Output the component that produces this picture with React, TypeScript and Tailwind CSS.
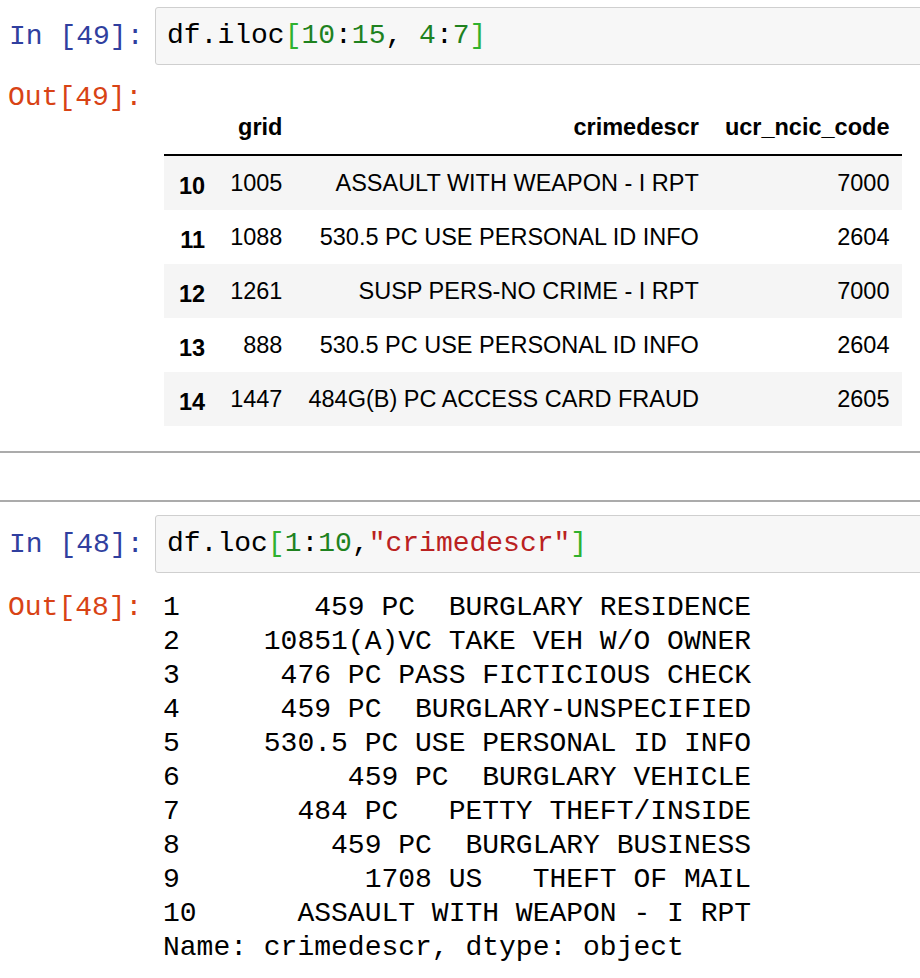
import React from "react";

const mono = "font-['Liberation_Mono',monospace] text-[28px]";

const rows = [
  { idx: "10", grid: "1005", desc: "ASSAULT WITH WEAPON - I RPT", code: "7000" },
  { idx: "11", grid: "1088", desc: "530.5 PC USE PERSONAL ID INFO", code: "2604" },
  { idx: "12", grid: "1261", desc: "SUSP PERS-NO CRIME - I RPT", code: "7000" },
  { idx: "13", grid: "888", desc: "530.5 PC USE PERSONAL ID INFO", code: "2604" },
  { idx: "14", grid: "1447", desc: "484G(B) PC ACCESS CARD FRAUD", code: "2605" },
];

const series: [string, string][] = [
  ["1", "459 PC  BURGLARY RESIDENCE"],
  ["2", "10851(A)VC TAKE VEH W/O OWNER"],
  ["3", "476 PC PASS FICTICIOUS CHECK"],
  ["4", "459 PC  BURGLARY-UNSPECIFIED"],
  ["5", "530.5 PC USE PERSONAL ID INFO"],
  ["6", "459 PC  BURGLARY VEHICLE"],
  ["7", "484 PC   PETTY THEFT/INSIDE"],
  ["8", "459 PC  BURGLARY BUSINESS"],
  ["9", "1708 US   THEFT OF MAIL"],
  ["10", "ASSAULT WITH WEAPON - I RPT"],
];

function InputRow({ n, children }: { n: number; children: React.ReactNode }) {
  return (
    <div className="flex">
      <div className={`${mono} w-[155px] shrink-0 pl-[9px] leading-[60px] text-[#303F9F]`}>
        In [{n}]:
      </div>
      <div
        className={`${mono} flex-1 -mr-[20px] h-[58px] border border-[#cfcfcf] rounded-[3px] bg-[#f7f7f7] pl-[11px] flex items-center text-black whitespace-pre`}
      >
        {children}
      </div>
    </div>
  );
}

const B = ({ c }: { c: string }) => <span className="text-[#2fb12f]">{c}</span>;
const N = ({ c }: { c: string }) => <span className="text-[#1f821f]">{c}</span>;

export default function App() {
  return (
    <div className="w-[920px] h-[978px] overflow-hidden bg-white">
      <div className="pt-[7px]">
        <InputRow n={49}>
          <span>df.iloc</span>
          <B c="[" />
          <N c="10" />
          <span>:</span>
          <N c="15" />
          <span>, </span>
          <N c="4" />
          <span>:</span>
          <N c="7" />
          <B c="]" />
        </InputRow>

        <div className="flex mt-[14px]">
          <div className={`${mono} w-[155px] shrink-0 pl-[8px] leading-[34px] text-[#D84315]`}>
            Out[49]:
          </div>
          <div className="pt-[20px] pl-[9px]">
            <table className="border-collapse font-['Liberation_Sans',Arial,sans-serif] text-[23.5px] text-black">
              <thead>
                <tr>
                  <th className="border-b-2 border-black px-[13px] py-[12px] leading-[29px]"></th>
                  <th className="border-b-2 border-black px-[13px] py-[12px] leading-[29px] text-right font-bold">grid</th>
                  <th className="border-b-2 border-black px-[13px] py-[12px] leading-[29px] text-right font-bold">crimedescr</th>
                  <th className="border-b-2 border-black px-[13px] py-[12px] leading-[29px] text-right font-bold">ucr_ncic_code</th>
                </tr>
              </thead>
              <tbody>
                {rows.map((r, i) => (
                  <tr key={r.idx} className={i % 2 === 0 ? "bg-[#f5f5f5]" : "bg-white"}>
                    <th className="pl-[15px] pr-[12px] leading-[30px] text-right font-bold pt-[15px] pb-[9px]">{r.idx}</th>
                    <td className="px-[13px] py-[12px] leading-[30px] text-right">{r.grid}</td>
                    <td className="px-[13px] py-[12px] leading-[30px] text-right">{r.desc}</td>
                    <td className="px-[13px] py-[12px] leading-[30px] text-right">{r.code}</td>
                  </tr>
                ))}
              </tbody>
            </table>
          </div>
        </div>
      </div>

      <div className="mt-[25px] h-[2px] bg-[#ababab]" />
      <div className="h-[47px]" />
      <div className="h-[2px] bg-[#ababab]" />

      <div className="pt-[13px]">
        <InputRow n={48}>
          <span>df.loc</span>
          <B c="[" />
          <N c="1" />
          <span>:</span>
          <N c="10" />
          <span>,</span>
          <span className="text-[#BA2121]">"crimedescr"</span>
          <B c="]" />
        </InputRow>

        <div className="flex mt-[16px]">
          <div className={`${mono} w-[155px] shrink-0 pl-[8px] leading-[34px] text-[#D84315]`}>
            Out[48]:
          </div>
          <div className={`${mono} pl-[8px] leading-[34px] text-black whitespace-pre`}>
            {series.map(([i, v]) => (
              <div key={i}>{i.padEnd(2, " ") + "    " + v.padStart(29, " ")}</div>
            ))}
            <div>Name: crimedescr, dtype: object</div>
          </div>
        </div>
      </div>
    </div>
  );
}
